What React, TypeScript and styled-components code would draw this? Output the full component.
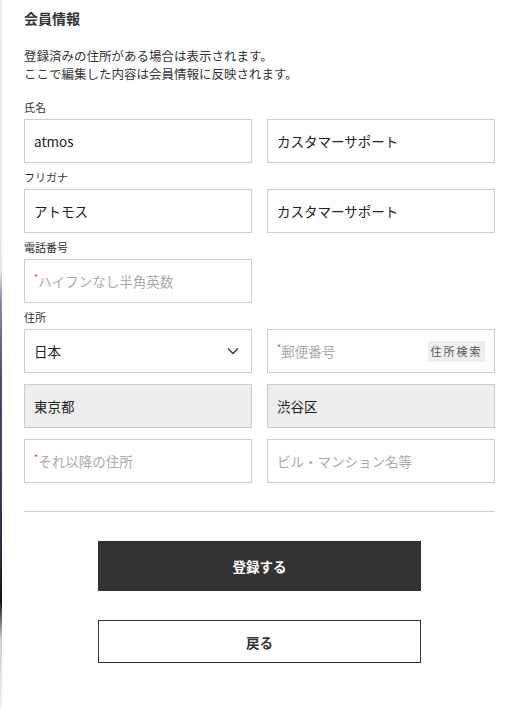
import React from "react";
import styled, { createGlobalStyle } from "styled-components";

const GlobalStyle = createGlobalStyle`
	html, body {
		margin: 0;
		padding: 0;
		background: #ffffff;
	}
	body {
		font-family: "Noto Sans CJK JP", "Noto Sans", sans-serif;
		color: #333333;
	}
	* {
		box-sizing: border-box;
	}
`;

interface FieldProps {
	value?: string;
	placeholder?: string;
	required?: boolean;
}

function Field({ value, placeholder, required }: FieldProps) {
	return (
		<Box>
			{value ? (
				<Value>{value}</Value>
			) : (
				<Placeholder>
					{required && <Star>*</Star>}
					{placeholder}
				</Placeholder>
			)}
		</Box>
	);
}

export default function App() {
	return (
		<>
			<GlobalStyle />
			<Page>
				<Edge />
				<Main>
					<Title>会員情報</Title>
					<Lead>
						登録済みの住所がある場合は表示されます。
						<br />
						ここで編集した内容は会員情報に反映されます。
					</Lead>

					<Label>氏名</Label>
					<Row>
						<Field value="atmos" />
						<Field value="カスタマーサポート" />
					</Row>

					<Label>フリガナ</Label>
					<Row>
						<Field value="アトモス" />
						<Field value="カスタマーサポート" />
					</Row>

					<Label>電話番号</Label>
					<Row>
						<Field placeholder="ハイフンなし半角英数" required />
					</Row>

					<Label>住所</Label>
					<Row $gap={11}>
						<Box>
							<Value>日本</Value>
							<Chevron viewBox="0 0 12 8" width="12" height="8">
								<path d="M1 1.5 L6 6.5 L11 1.5" fill="none" stroke="#333" strokeWidth="1.3" />
							</Chevron>
						</Box>
						<Box>
							<Placeholder>
								<Star>*</Star>郵便番号
							</Placeholder>
							<SearchButton>住所検索</SearchButton>
						</Box>
					</Row>
					<Row $gap={11}>
						<Box $filled>
							<Value>東京都</Value>
						</Box>
						<Box $filled>
							<Value>渋谷区</Value>
						</Box>
					</Row>
					<Row $gap={0}>
						<Field placeholder="それ以降の住所" required />
						<Field placeholder="ビル・マンション名等" />
					</Row>

					<Divider />

					<Actions>
						<PrimaryButton>登録する</PrimaryButton>
						<SecondaryButton>戻る</SecondaryButton>
					</Actions>
				</Main>
			</Page>
		</>
	);
}

const Page = styled.div`
	display: flex;
	width: 515px;
	min-height: 708px;
`;

const Edge = styled.div`
	width: 2px;
	flex-shrink: 0;
	background: linear-gradient(
		to bottom,
		#ececec 0px,
		#e8e8ea 270px,
		#8a8aa8 300px,
		#4a4a7a 380px,
		#3c3c66 470px,
		#2a2a3a 560px,
		#111111 600px,
		#cfcfcf 640px,
		#f0f0f0 708px
	);
`;

const Main = styled.main`
	width: 493px;
	padding: 8px 18px 40px 22px;
`;

const Title = styled.h2`
	margin: 0;
	font-size: 14px;
	line-height: 20px;
	font-weight: bold;
	color: #333;
`;

const Lead = styled.p`
	margin: 19px 0 17px;
	font-size: 12.5px;
	line-height: 18px;
	color: #333;
`;

const Label = styled.div`
	font-size: 11px;
	line-height: 15px;
	margin: 0 0 4px;
	color: #333;
`;

const Row = styled.div<{ $gap?: number }>`
	display: grid;
	grid-template-columns: 228px 228px;
	column-gap: 15px;
	margin-bottom: ${(p) => p.$gap ?? 7}px;
`;

const Box = styled.div<{ $filled?: boolean }>`
	height: 44px;
	border: 1px solid #cccccc;
	background: ${(p) => (p.$filled ? "#eeeeee" : "#ffffff")};
	display: flex;
	align-items: center;
	justify-content: space-between;
	padding: 0 10px 0 9px;
`;

const Value = styled.span`
	font-size: 13.5px;
	color: #222;
`;

const Placeholder = styled.span`
	font-size: 13.5px;
	color: #aaaaaa;
	display: flex;
	align-items: flex-start;
`;

const Star = styled.span`
	color: #e04848;
	font-size: 9px;
	line-height: 9px;
	margin-top: 2px;
`;

const Chevron = styled.svg`
	margin-right: 2px;
`;

const SearchButton = styled.span`
	background: #eeeeee;
	font-size: 11px;
	letter-spacing: 2px;
	color: #555;
	width: 57px;
	height: 21px;
	display: flex;
	align-items: center;
	justify-content: center;
	margin-right: -1px;
`;

const Divider = styled.hr`
	border: none;
	border-top: 1px solid #cccccc;
	margin: 28px 0 29px;
	width: 471px;
`;

const Actions = styled.div`
	width: 471px;
	display: flex;
	flex-direction: column;
	align-items: center;
	gap: 29px;
`;

const PrimaryButton = styled.button`
	width: 323px;
	height: 50px;
	border: none;
	background: #333333;
	color: #ffffff;
	font-family: inherit;
	font-size: 13.5px;
	font-weight: bold;
`;

const SecondaryButton = styled.button`
	width: 323px;
	height: 43px;
	border: 1px solid #333333;
	background: #ffffff;
	color: #333333;
	font-family: inherit;
	font-size: 13.5px;
	font-weight: bold;
`;
